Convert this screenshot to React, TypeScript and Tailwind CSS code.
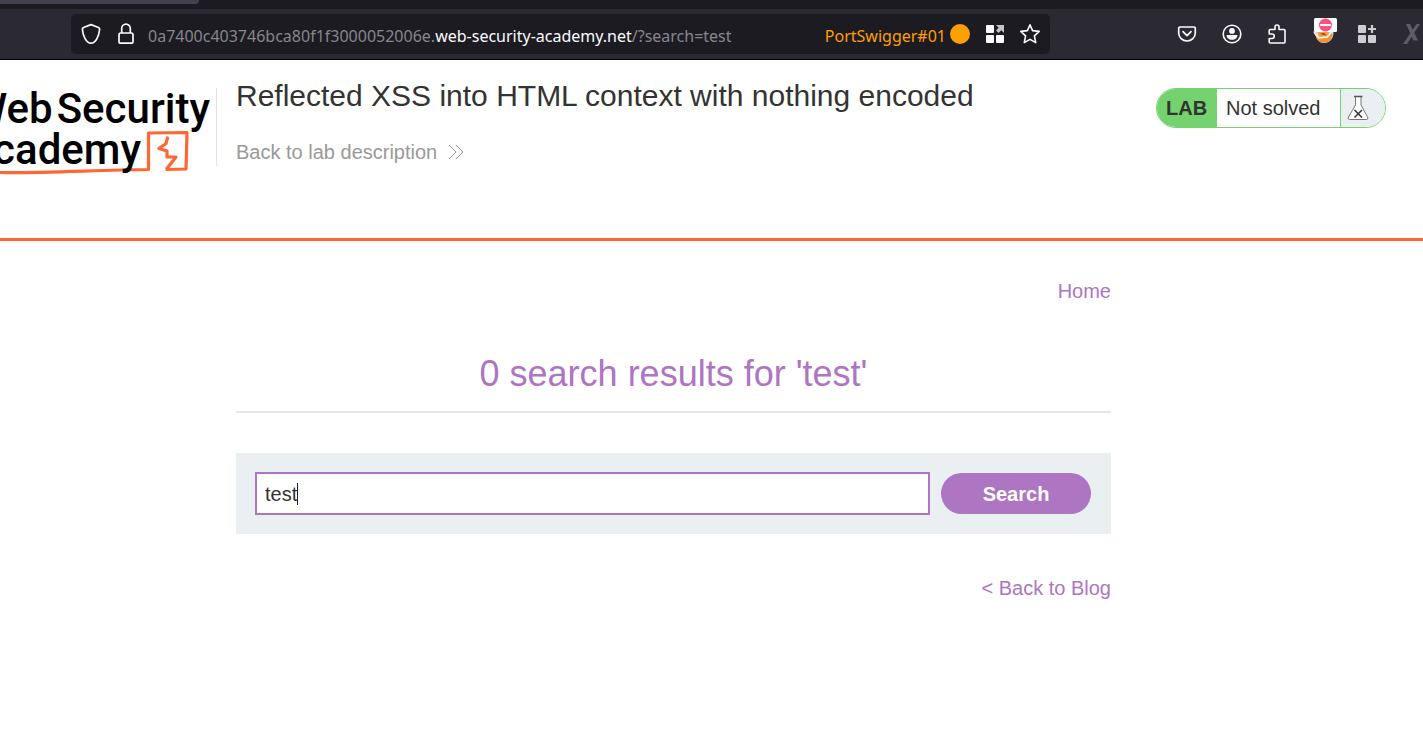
import { useState } from "react";
import type { ReactNode } from "react";

function ToolButton({ label, children }: { label: string; children: ReactNode }) {
  return (
    <button type="button" aria-label={label} className="flex h-6 w-6 shrink-0 items-center justify-center">
      {children}
    </button>
  );
}

function ShieldIcon() {
  return (
    <svg width="20" height="22" viewBox="0 0 20 22" fill="none" stroke="#fbfbfe" strokeWidth="1.7" strokeLinejoin="round">
      <path d="M10 1.6 17.500 4.500c1 .4 1.200 1 1.100 2C18 12.500 15 20.200 10 20.200S2 12.500 1.400 6.500c-.1-1 .1-1.600 1.100-2Z" />
    </svg>
  );
}

function LockIcon() {
  return (
    <svg width="18" height="22" viewBox="0 0 18 22" fill="none" stroke="#fbfbfe" strokeWidth="1.7">
      <rect x="2" y="10" width="14" height="10.200" rx="1.800" />
      <path d="M4.700 10V5.500a4.300 4.300 0 0 1 8.600 0V10" />
    </svg>
  );
}

function GridArrowIcon() {
  return (
    <svg width="20" height="20" viewBox="0 0 20 20" fill="#fbfbfe">
      <rect x="1" y="1" width="8" height="8" rx="1" />
      <rect x="1" y="11" width="8" height="8" rx="1" />
      <rect x="11" y="11" width="8" height="8" rx="1" />
      <path d="M11 1h8v8l-2.700-2.700L13.500 9 11 6.500l2.700-2.800Z" fill="#c4c4c8" />
    </svg>
  );
}

function StarIcon() {
  return (
    <svg width="22" height="22" viewBox="0 0 22 22" fill="none" stroke="#fbfbfe" strokeWidth="1.6" strokeLinejoin="round">
      <path d="m11 1.800 2.600 5.800 6.600.8-4.800 4.500 1.300 6.700-5.700-3.200-5.700 3.200 1.300-6.700L1.800 8.400l6.600-.8Z" />
    </svg>
  );
}

function PocketIcon() {
  return (
    <svg width="20" height="18" viewBox="0 0 20 18" fill="none" stroke="#fbfbfe" strokeWidth="1.7" strokeLinecap="round" strokeLinejoin="round">
      <path d="M3 2h14a1.300 1.300 0 0 1 1.300 1.300V8a8.300 8 0 0 1-16.600 0V3.300A1.300 1.300 0 0 1 3 2Z" />
      <path d="m6 6.700 4 4 4-4" />
    </svg>
  );
}

function AccountIcon() {
  return (
    <svg width="20" height="20" viewBox="0 0 20 20">
      <circle cx="10" cy="10" r="8.800" fill="none" stroke="#fbfbfe" strokeWidth="1.600" />
      <circle cx="10" cy="6.900" r="2.900" fill="#fbfbfe" />
      <path d="M4.500 11h11c0 3-2.300 4.800-5.500 4.800S4.500 14 4.500 11Z" fill="#fbfbfe" />
    </svg>
  );
}

function PuzzleIcon() {
  return (
    <svg width="20" height="22" viewBox="0 0 20 22" fill="none" stroke="#fbfbfe" strokeWidth="1.600" strokeLinejoin="round">
      <path d="M3.200 6.500H8V4a2 2 0 0 1 4 0v2.500h5a1 1 0 0 1 1 1V19a1 1 0 0 1-1 1H3.200a1 1 0 0 1-1-1v-3.500H5a2 2 0 0 0 0-4.500H2.200V7.500a1 1 0 0 1 1-1Z" />
    </svg>
  );
}

function FoxIcon() {
  return (
    <svg className="shrink-0" width="26" height="26" viewBox="0 0 26 26">
      <path d="M0 13.500h20.500c.5 7-4 11.500-9.500 11.500-4 0-6.500-2-7.500-5.500Z" fill="#dcd6cd" />
      <path d="M3 19c3 1 9 1 13-1l3.500-3c.5 5-3 9.500-8.500 9.500-4 0-7-2-8-5.500Z" fill="#f0922e" />
      <path d="M4.500 14 17 13l-3 5.500-8 .5Z" fill="#f7a03a" />
      <path d="m7 15.500 4-.5 3 2.500-4-.5Z" fill="#8c5124" />
      <path d="m1.500 14.500 4 5.500 9-1 4-5.500" fill="none" stroke="#f4efe8" strokeWidth="1.500" />
      <rect x="1" y="0" width="23" height="14" rx="1.500" fill="#fff" />
      <circle cx="12.500" cy="7" r="6.500" fill="#ff4f80" />
      <path d="M8 7h9" stroke="#fff" strokeWidth="2.200" strokeLinecap="round" />
    </svg>
  );
}

function GridPlusIcon() {
  return (
    <svg width="20" height="20" viewBox="0 0 20 20" fill="#cfcfd3">
      <rect x="1" y="1" width="8" height="8" rx="1" />
      <rect x="1" y="11" width="8" height="8" rx="1" />
      <rect x="11" y="11" width="8" height="8" rx="1" />
      <path d="M15 1v8M11 5h8" fill="none" stroke="#cfcfd3" strokeWidth="2.200" />
    </svg>
  );
}

function CrossIcon() {
  return (
    <svg width="20" height="20" viewBox="0 0 20 20">
      <path d="M4 0h4l8 16.500h-4.500ZM14.500 0H18L5 20H1Z" fill="#5e5d63" />
    </svg>
  );
}

function BrowserBar() {
  return (
    <div className="bg-[#1c1b22] font-['Noto_Sans','Open_Sans',sans-serif]">
      <div className="h-[9px]">
        <div className="h-1 w-[199px] rounded-br bg-[#42414d]" />
      </div>
      <div className="flex h-[51px] items-center border-b border-black bg-[#2b2a33] pl-[71px]">
        <div className="flex h-10 w-[979px] shrink-0 items-center rounded-[5px] bg-[#1c1b22] pr-2 pl-2">
          <ToolButton label="Tracking protection"><ShieldIcon /></ToolButton>
          <div className="ml-[11px] flex"><ToolButton label="Connection security"><LockIcon /></ToolButton></div>
          <p className="ml-[10px] grow pt-1 text-base leading-6 whitespace-nowrap text-[#87868c]">
            0a7400c403746bca80f1f3000052006e.<span className="text-[#fbfbfe]">web-security-academy.net</span>/?search=test
          </p>
          <div className="flex items-center gap-1">
            <span className="pt-1 text-base leading-6 text-[#ff9f00]">PortSwigger#01</span>
            <span className="h-5 w-5 rounded-full bg-[#ff9f00]" />
          </div>
          <div className="ml-[13px] flex gap-[11px]">
            <ToolButton label="Container tabs"><GridArrowIcon /></ToolButton>
            <ToolButton label="Bookmark"><StarIcon /></ToolButton>
          </div>
        </div>
        <div className="-mr-px ml-auto flex min-w-0 shrink-0 items-center gap-[21px]">
          <ToolButton label="Pocket"><PocketIcon /></ToolButton>
          <ToolButton label="Account"><AccountIcon /></ToolButton>
          <ToolButton label="Extensions"><PuzzleIcon /></ToolButton>
          <div className="-mr-1 flex pb-1.5 pl-1"><ToolButton label="Proxy switcher"><FoxIcon /></ToolButton></div>
          <ToolButton label="Add-ons"><GridPlusIcon /></ToolButton>
          <ToolButton label="Extension"><CrossIcon /></ToolButton>
        </div>
      </div>
    </div>
  );
}

function Logo() {
  return (
    <a href="#academy" aria-label="Web Security Academy" className="relative flex h-[90px] w-[216px] shrink-0 flex-col items-end overflow-hidden pr-1.5 font-['Roboto',sans-serif] text-[42px] leading-[41px] font-medium whitespace-nowrap text-black">
      <svg className="absolute top-0 left-0" width="216" height="90" viewBox="0 0 216 90" fill="none" stroke="#ff6633" strokeLinejoin="round" strokeLinecap="round">
        <path d="M-2 84.500C50 85 95 82 148.500 81.500L148.500 45l38.500-.5-1 36.500-19 .5" strokeWidth="3.200" />
        <path d="m167.500 50-1.500 5.500-7 5 8 2.500v6h9l-9 11.500" strokeWidth="3.200" />
      </svg>
      <span className="relative flex gap-1"><span>Web</span><span>Security</span></span>
      <span className="relative pr-[69px]">Academy</span>
    </a>
  );
}

function LabStatus() {
  return (
    <div className="mr-[37px] flex h-10 w-[230px] shrink-0 overflow-hidden rounded-full border border-[#74d36e] text-xl leading-[38px] text-[#333332]">
      <span className="w-[60px] shrink-0 bg-[#74d36e] pl-[9px] font-bold">LAB</span>
      <span className="grow pl-[9px]">Not solved</span>
      <span className="flex w-[45px] shrink-0 items-center border-l border-[#74d36e] bg-[#eaeff2] pl-1.5">
        <svg width="22" height="26" viewBox="0 0 22 26" fill="none" stroke="#555554">
          <path d="M8.500 2v8L1.500 22c-.8 1.700-.2 2.500 1 2.500h17c1.200 0 1.800-.8 1-2.500L14 10V2" fill="#fff" strokeWidth=".8" />
          <path d="M7 1.500h8.500" strokeWidth="1.500" />
          <path d="m7.500 15 7.500 7.500m0-7.500-7.500 7.500" stroke="#333332" strokeWidth="1.500" />
        </svg>
      </span>
    </div>
  );
}

export default function App() {
  const [query, setQuery] = useState("test");

  return (
    <div className="min-h-screen overflow-x-hidden bg-white font-['Liberation_Sans',Arial,sans-serif] text-[#333332]">
      <BrowserBar />
      <header className="flex h-[181px] items-start border-b-[3px] border-[#ff6633] pt-[18px]">
        <div className="flex grow pt-[10px]">
          <Logo />
          <div className="h-[78px] w-px shrink-0 bg-[#e4e4e4]" />
          <div className="-mt-[10px] ml-[19px]">
            <h1 className="text-[30px] leading-9 whitespace-nowrap">Reflected XSS into HTML context with nothing encoded</h1>
            <a href="#description" className="mt-[26px] flex items-center gap-[11px] text-xl leading-6 text-[#999999]">
              Back to lab description
              <svg width="17" height="16" viewBox="0 0 17 16" fill="none" stroke="#999999">
                <path d="m1 1 7 7-7 7M8 1l7 7-7 7" />
              </svg>
            </a>
          </div>
        </div>
        <div className="pt-[10px]"><LabStatus /></div>
      </header>
      <main className="mr-[312px] ml-[236px]">
        <nav className="flex justify-end pt-[38px] text-xl leading-6 text-[#ae75c2]">
          <a href="#home">Home</a>
        </nav>
        <h2 className="mt-[47px] border-b-2 border-[#e4e6e8] pb-[13px] text-center text-4xl leading-[48px] text-[#ae75c2]">
          0 search results for 'test'
        </h2>
        <form onSubmit={(e) => e.preventDefault()} className="mt-10 flex items-center gap-[11px] bg-[#eaeff2] py-[19px] pr-5 pl-[19px]">
          <div className="relative grow">
            <input
              type="text"
              aria-label="Search the blog"
              value={query}
              onChange={(e) => setQuery(e.target.value)}
              className="block h-[43px] w-full border-2 border-[#ae75c2] bg-white px-2 pt-0.5 text-xl text-[#333332] outline-none"
            />
            <span className="absolute top-[11px] left-[42px] h-[22px] w-px bg-[#222222]" />
          </div>
          <button type="submit" className="h-[41px] w-[150px] rounded-full bg-[#ae75c2] text-xl font-bold text-white">
            Search
          </button>
        </form>
        <div className="mt-[42px] flex justify-end text-xl leading-6 text-[#ae75c2]">
          <a href="#blog">&lt; Back to Blog</a>
        </div>
      </main>
    </div>
  );
}
